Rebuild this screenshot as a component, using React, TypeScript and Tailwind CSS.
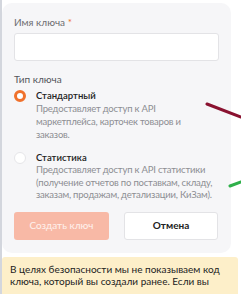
export default function App() {
  return (
    <div className="relative h-[294px] w-[241px] overflow-hidden bg-white font-['Lato',sans-serif]">
      <div className="flex h-full border-l-2 border-[#d3d6dd]">
        <div className="flex w-[236px] flex-col">
          {/* card */}
          <div className="mt-[3px] w-[229px] rounded-[10px] bg-[#f6f6f8] px-3 pb-[13px] pt-[13px]">
            <div className="text-[10px] leading-[12px] text-[#6d6d70]">
              Имя ключа <span className="text-[#f0712c]">*</span>
            </div>
            <div className="mt-[5px] h-[28px] w-[205px] rounded-[3px] border border-[#e3e3e6] bg-white" />

            <div className="mt-[12px] text-[10px] leading-[12px] text-[#55575c]">Тип ключа</div>

            <div className="mt-[4px] flex gap-[10px]">
              <div className="mt-[0.5px] h-[12px] w-[12px] shrink-0 rounded-full border-[3.5px] border-[#f0712c] bg-white" />
              <div>
                <div className="text-[9.5px] leading-[13px] font-semibold text-[#222]">Стандартный</div>
                <div className="text-[9.5px] leading-[13px] tracking-[-0.2px] text-[#8d8e93]">
                  Предоставляет доступ к API
                  <br />
                  маркетплейса, карточек товаров и
                  <br />
                  заказов.
                </div>
              </div>
            </div>

            <div className="mt-[10px] flex gap-[10px]">
              <div className="mt-[0.5px] h-[12px] w-[12px] shrink-0 rounded-full border border-[#e6e6e9] bg-white" />
              <div>
                <div className="text-[9.5px] leading-[13px] font-semibold text-[#222]">Статистика</div>
                <div className="text-[9.5px] leading-[12.5px] tracking-[-0.2px] text-[#8d8e93]">
                  Предоставляет доступ к API статистики (получение отчетов по поставкам, складу, заказам, продажам, детализации, КиЗам).
                </div>
              </div>
            </div>

            <div className="mt-[10px] flex gap-[15px]">
              <button className="h-[28px] w-[95px] rounded-[3px] bg-[#f8b9a6] text-[10px] text-white/80">
                Создать ключ
              </button>
              <button className="h-[28px] w-[94px] rounded-[3px] border border-[#e3e3e6] bg-white text-[10px] font-bold text-[#222]">
                Отмена
              </button>
            </div>
          </div>

          {/* notice */}
          <div className="mt-[4px] flex-1 rounded-t-[3px] bg-[#fdefc9] px-[8px] pt-[6px] text-[10px] leading-[12.5px] text-[#222]">
            В целях безопасности мы не показываем код ключа, который вы создали ранее. Если вы
          </div>
        </div>
      </div>

      {/* annotation strokes */}
      <svg className="pointer-events-none absolute left-0 top-0" width="241" height="294">
        <path d="M207 104 L241 117" stroke="#8a1230" strokeWidth="3" strokeLinecap="round" />
        <path d="M230 186 L241 182" stroke="#2fb04a" strokeWidth="3" strokeLinecap="round" />
      </svg>
    </div>
  );
}
